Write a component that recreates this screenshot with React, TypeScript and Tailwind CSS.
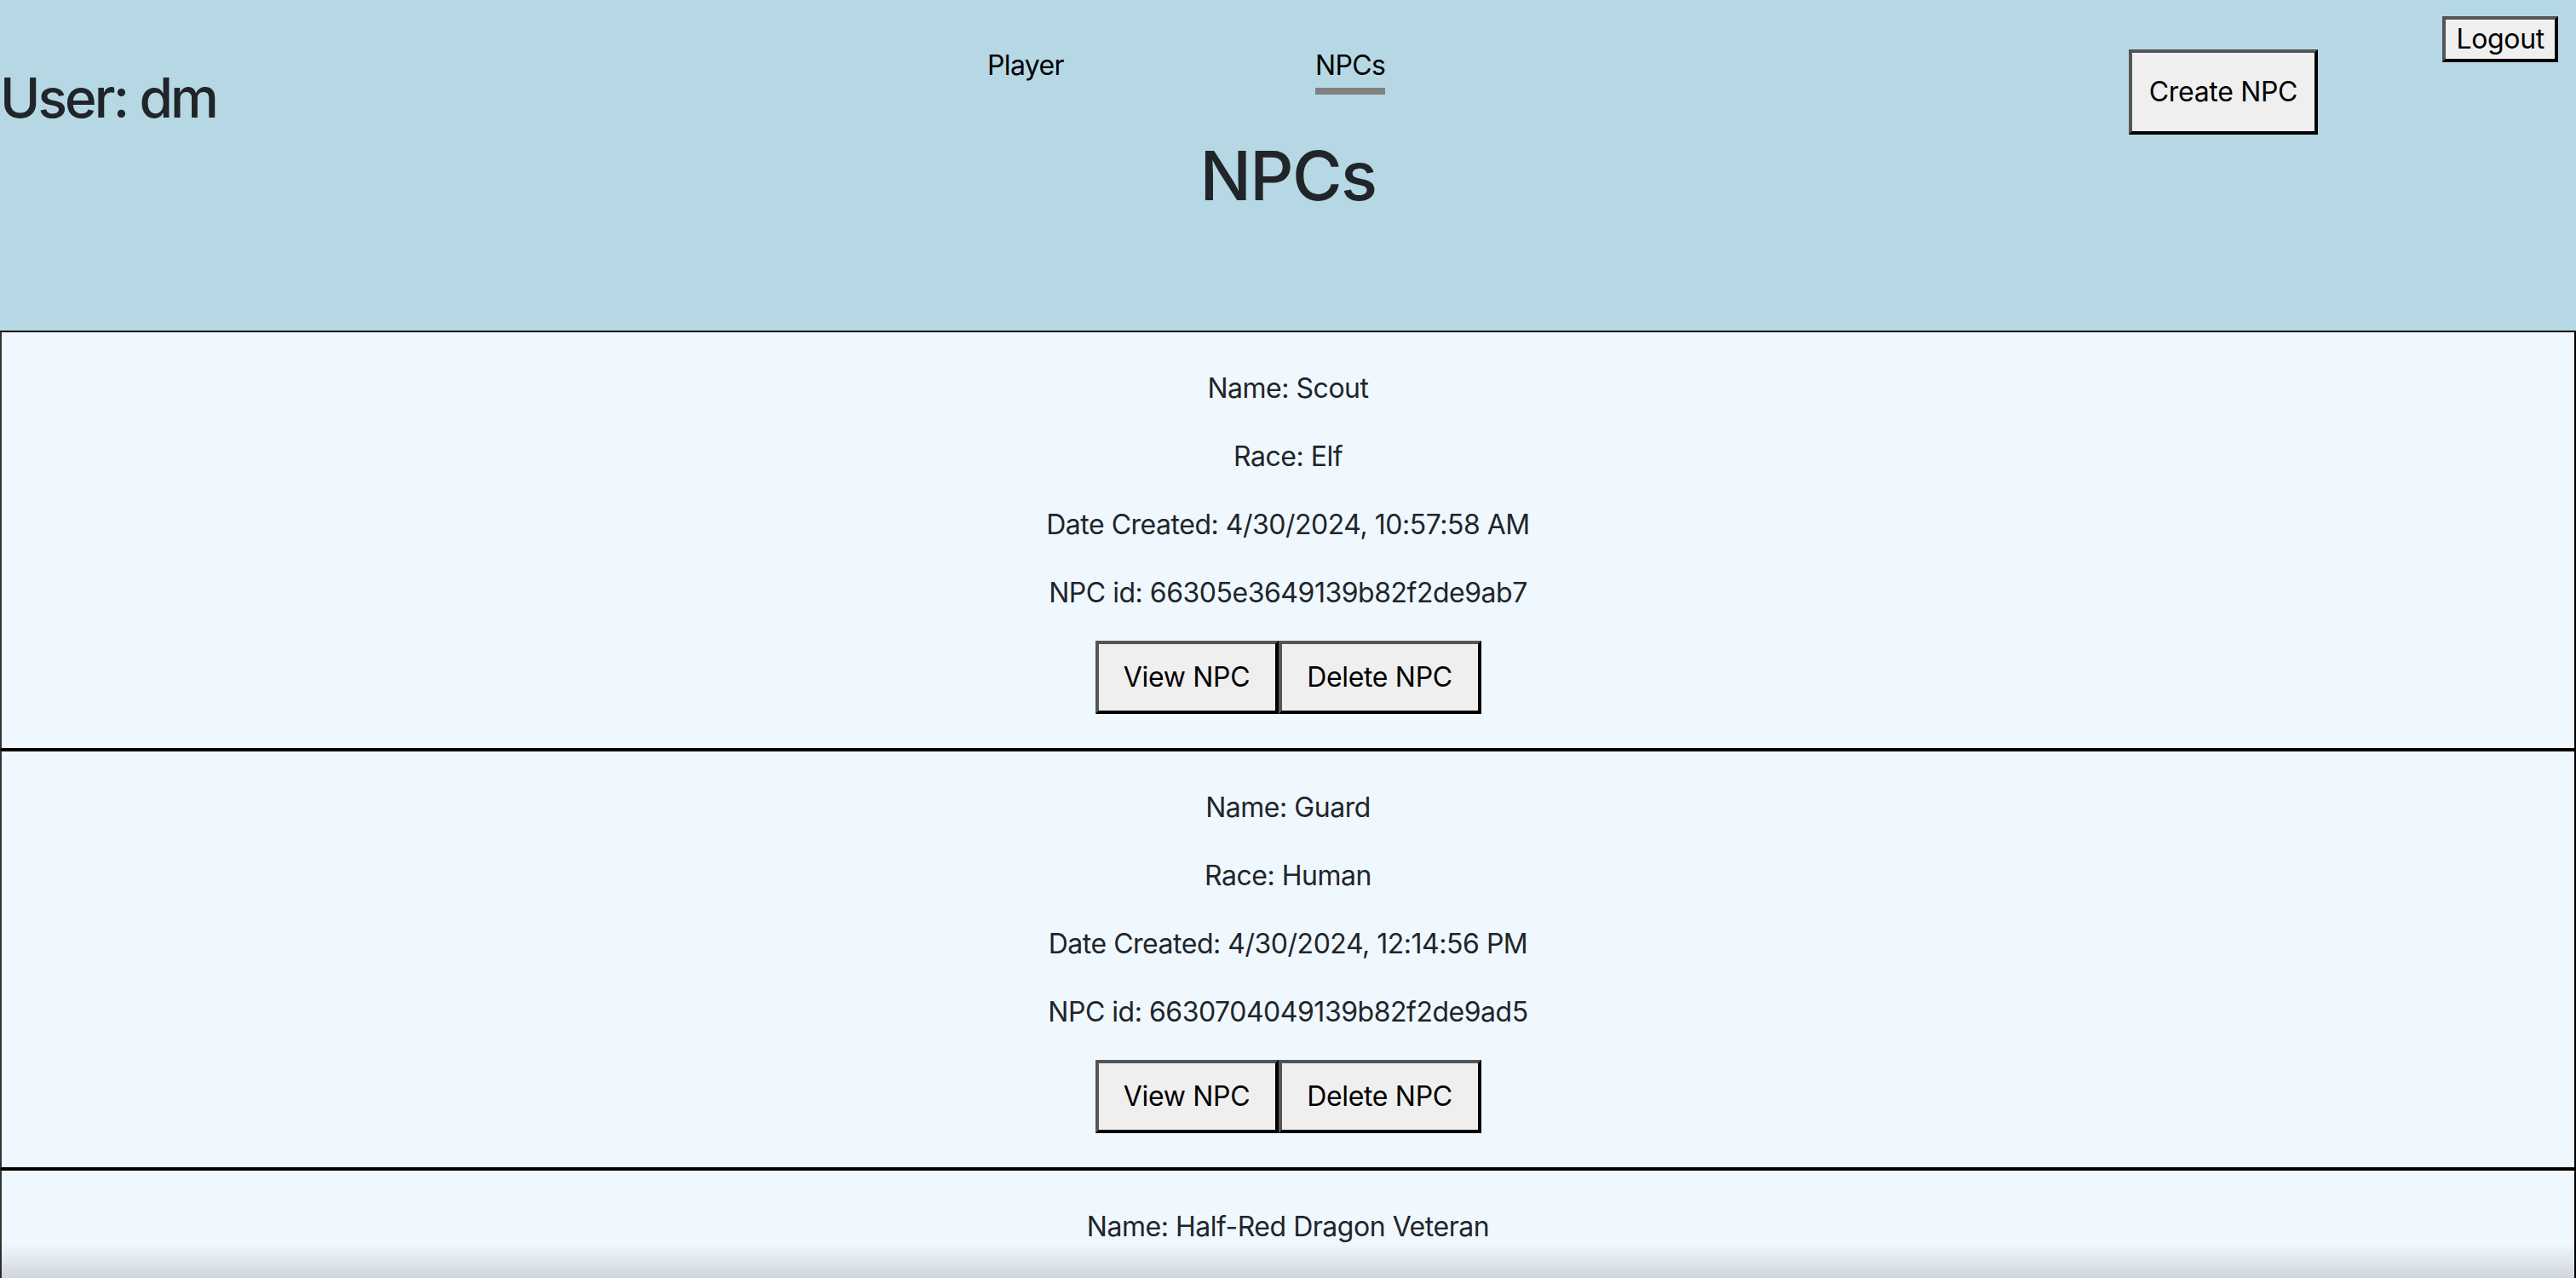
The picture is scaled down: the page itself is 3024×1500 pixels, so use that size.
import React from 'react';

interface Npc {
  name: string;
  race: string;
  created: string;
  id: string;
}

const npcs: Npc[] = [
  { name: 'Scout', race: 'Elf', created: '4/30/2024, 10:57:58 AM', id: '66305e3649139b82f2de9ab7' },
  { name: 'Guard', race: 'Human', created: '4/30/2024, 12:14:56 PM', id: '6630704049139b82f2de9ad5' },
  { name: 'Half-Red Dragon Veteran', race: 'Human', created: '4/30/2024, 12:20:11 PM', id: '663071a349139b82f2de9ae1' },
];

const btn =
  'bg-[#efefef] text-black border-[4px] border-t-[#555] border-l-[#555] border-b-black border-r-black flex items-center justify-center leading-none tracking-[-0.01em]';

const NpcCard: React.FC<{ npc: Npc }> = ({ npc }) => (
  <div className="bg-[#f0f8ff] border-2 border-black border-l-[#333] px-[10px] py-[10px] text-center text-[#212529] text-[32px] leading-[48px] tracking-[-0.015em]">
    <p className="my-[32px]">Name: {npc.name}</p>
    <p className="my-[32px]">Race: {npc.race}</p>
    <p className="my-[32px]">Date Created: {npc.created}</p>
    <p className="my-[32px]">NPC id: {npc.id}</p>
    <div className="flex justify-center mt-[31px] mb-[30px]">
      <button className={`${btn} w-[215px] h-[86px] text-[32px]`}>View NPC</button>
      <button className={`${btn} w-[238px] h-[86px] text-[32px]`}>Delete NPC</button>
    </div>
  </div>
);

export default function App() {
  return (
    <div className="min-h-screen bg-white" style={{ fontFamily: 'Inter, "Noto Sans", sans-serif' }}>
      {/* Header */}
      <header className="relative h-[388px] bg-[#b6d8e4]">
        <div className="flex items-start h-[166px]">
          <h1 className="w-[1159px] shrink-0 mt-[83px] text-[64px] leading-[64px] font-medium tracking-[-0.045em] text-[#212529]">
            User: dm
          </h1>
          <nav className="flex gap-[295px] mt-[53px] text-[32px] leading-[48px] tracking-[-0.02em] text-black">
            <a className="pb-[2px] border-b-[8px] border-transparent">Player</a>
            <a className="pb-[2px] border-b-[8px] border-[#808080]">NPCs</a>
          </nav>
          <button className={`${btn} ml-auto mr-[303px] mt-[58px] w-[222px] h-[100px] text-[32px]`}>
            Create NPC
          </button>
        </div>
        <h1 className="text-center text-[80px] leading-[80px] font-medium tracking-[-0.02em] text-[#212529]">NPCs</h1>
        <button className={`${btn} absolute top-[19px] right-[21px] h-[54px] px-[12px] text-[32px]`}>
          Logout
        </button>
      </header>

      {/* NPC list */}
      <main>
        {npcs.map((npc) => (
          <NpcCard key={npc.id} npc={npc} />
        ))}
      </main>

      {/* window shadow at bottom edge */}
      <div className="fixed bottom-0 left-0 right-0 h-[40px] bg-linear-to-b from-transparent to-[#00000022] pointer-events-none" />
    </div>
  );
}
